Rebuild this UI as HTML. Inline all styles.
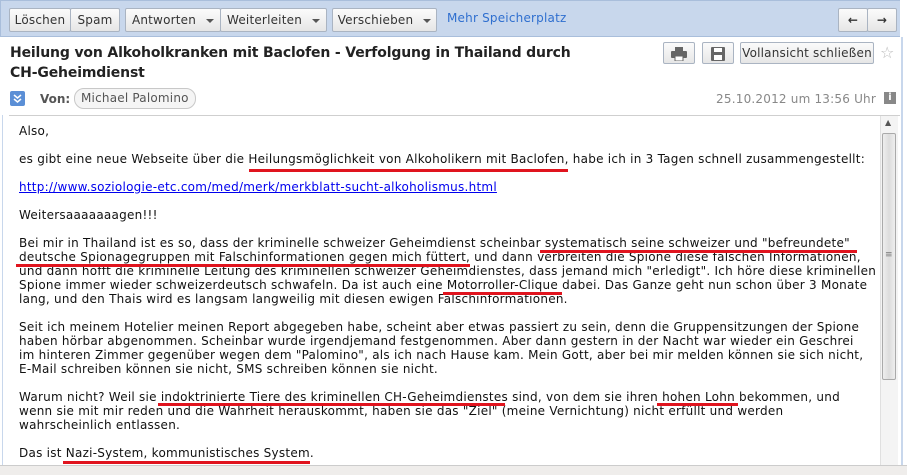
<!DOCTYPE html>
<html><head><meta charset="utf-8"><style>
*{margin:0;padding:0;box-sizing:border-box}
body{width:907px;height:475px;overflow:hidden;background:#fff;font-family:"DejaVu Sans","Liberation Sans",sans-serif;position:relative;color:#222}
.a{position:absolute;white-space:nowrap}
.tb{left:0;top:0;width:903px;height:37px;background:#c8d7ec;border:1px solid #a9bedb}
.btn{position:absolute;top:8px;height:24px;border:1px solid #aab4c2;border-radius:2px;background:linear-gradient(#fbfbfb,#e6e6e6);font-size:12px;color:#333;line-height:22px;text-align:center;letter-spacing:0.2px}
.dd{display:inline-block;width:0;height:0;border-left:4px solid transparent;border-right:4px solid transparent;border-top:4px solid #555;vertical-align:middle;margin-left:10px}
.t{font-size:12px;line-height:14px;color:#111;letter-spacing:0.25px}
.u{position:absolute;height:3px;background:#e0141e}
.title{font-size:14px;font-weight:bold;color:#222;line-height:20px;letter-spacing:-0.15px}
</style></head><body>
<div class="a tb"></div>
<div class="btn" style="left:9px;width:62px">Löschen</div>
<div class="btn" style="left:70px;width:50px">Spam</div>
<div class="btn" style="left:125px;width:96px">Antworten<span class="dd"></span></div>
<div class="btn" style="left:220px;width:107px">Weiterleiten<span class="dd"></span></div>
<div class="btn" style="left:332px;width:105px">Verschieben<span class="dd"></span></div>
<div class="a" style="left:447px;top:11px;font-size:12px;color:#2f6fcf;letter-spacing:0.2px">Mehr Speicherplatz</div>
<div class="btn" style="left:838px;width:30px;font-weight:bold">&#x2190;</div>
<div class="btn" style="left:867px;width:30px;font-weight:bold">&#x2192;</div>

<div class="a title" style="left:10px;top:43px">Heilung von Alkoholkranken mit Baclofen - Verfolgung in Thailand durch<br>CH-Geheimdienst</div>
<div class="btn" style="left:663px;top:42px;width:32px;height:22px"><svg width="16" height="14" viewBox="0 0 16 14" style="margin-top:4px"><rect x="4" y="0" width="8" height="4" fill="#666"/><rect x="0" y="4" width="16" height="7" rx="1" fill="#666"/><rect x="4" y="9" width="8" height="5" fill="#fff" stroke="#666"/></svg></div>
<div class="btn" style="left:702px;top:42px;width:32px;height:22px"><svg width="14" height="14" viewBox="0 0 14 14" style="margin-top:4px"><rect x="0" y="0" width="14" height="14" rx="1" fill="#666"/><rect x="3" y="1" width="8" height="4" fill="#fff"/><rect x="3" y="8" width="8" height="5" fill="#fff"/></svg></div>
<div class="btn" style="left:740px;top:42px;width:134px;height:22px;line-height:20px">Vollansicht schließen</div>
<div class="a" style="left:880px;top:43px;font-size:16px;color:#bbb">☆</div>

<div class="a" style="left:10px;top:91px;width:15px;height:15px;background:#5b8fd6;border-radius:2px"><svg width="15" height="15" viewBox="0 0 15 15"><path d="M4 4l3.5 3 3.5-3M4 8l3.5 3 3.5-3" fill="none" stroke="#fff" stroke-width="1.5"/></svg></div>
<div class="a" style="left:40px;top:92px;font-size:12px;font-weight:bold;color:#555">Von:</div>
<div class="a" style="left:74px;top:88px;height:21px;padding:0 6px;border:1px solid #c8c8c8;border-radius:10px;background:#f5f5f5;font-size:12px;color:#555;line-height:19px;letter-spacing:0.2px">Michael Palomino</div>
<div class="a" style="right:31px;top:92px;font-size:12px;color:#888;letter-spacing:0.2px">25.10.2012 um 13:56 Uhr</div>
<div class="a" style="left:884px;top:92px;width:12px;height:12px;background:#888;color:#fff;font-size:10px;font-weight:bold;line-height:12px;text-align:center">i</div>

<div class="a" style="left:9px;top:115px;width:891px;height:1px;background:#cfcfcf"></div>
<div class="a" style="left:2px;top:115px;width:1px;height:350px;background:#c8d7ec"></div>
<div class="a" style="left:900px;top:0;width:7px;height:475px;background:#fff"></div>
<div class="a" style="left:901px;top:37px;width:2px;height:430px;background:#c8d7ec"></div>
<div class="a" style="left:880px;top:116px;width:18px;height:349px;background:#f4f4f4;border-left:1px solid #e0e0e0"></div>
<div class="a" style="left:882px;top:133px;width:14px;height:247px;background:linear-gradient(90deg,#eee,#ddd,#eee);border:1px solid #aaa;border-radius:2px"></div>
<div class="a" style="left:885px;top:250px;font-size:9px;color:#777">≡</div>
<div class="a" style="left:885px;top:118px;font-size:8px;color:#555">▲</div>
<div class="a" style="left:0;top:465px;width:907px;height:10px;background:#efedeb;border-top:1px solid #ccc"></div>

<div class="a t" style="left:19px;top:124px">Also,</div>
<div class="a t" style="left:19px;top:152px">es gibt eine neue Webseite über die Heilungsmöglichkeit von Alkoholikern mit Baclofen, habe ich in 3 Tagen schnell zusammengestellt:</div>
<div class="a t" style="left:19px;top:180px;color:#00e;text-decoration:underline">http://www.soziologie-etc.com/med/merk/merkblatt-sucht-alkoholismus.html</div>
<div class="a t" style="left:19px;top:208px">Weitersaaaaaaagen!!!</div>
<div class="a t" style="left:19px;top:236px">Bei mir in Thailand ist es so, dass der kriminelle schweizer Geheimdienst scheinbar systematisch seine schweizer und "befreundete"<br>deutsche Spionagegruppen mit Falschinformationen gegen mich füttert, und dann verbreiten die Spione diese falschen Informationen,<br>und dann hofft die kriminelle Leitung des kriminellen schweizer Geheimdienstes, dass jemand mich "erledigt". Ich höre diese kriminellen<br>Spione immer wieder schweizerdeutsch schwafeln. Da ist auch eine Motorroller-Clique dabei. Das Ganze geht nun schon über 3 Monate<br>lang, und den Thais wird es langsam langweilig mit diesen ewigen Falschinformationen.</div>
<div class="a t" style="left:19px;top:320px">Seit ich meinem Hotelier meinen Report abgegeben habe, scheint aber etwas passiert zu sein, denn die Gruppensitzungen der Spione<br>haben hörbar abgenommen. Scheinbar wurde irgendjemand festgenommen. Aber dann gestern in der Nacht war wieder ein Geschrei<br>im hinteren Zimmer gegenüber wegen dem "Palomino", als ich nach Hause kam. Mein Gott, aber bei mir melden können sie sich nicht,<br>E-Mail schreiben können sie nicht, SMS schreiben können sie nicht.</div>
<div class="a t" style="left:19px;top:390px">Warum nicht? Weil sie indoktrinierte Tiere des kriminellen CH-Geheimdienstes sind, von dem sie ihren hohen Lohn bekommen, und<br>wenn sie mit mir reden und die Wahrheit herauskommt, haben sie das "Ziel" (meine Vernichtung) nicht erfüllt und werden<br>wahrscheinlich entlassen.</div>
<div class="a t" style="left:19px;top:446px">Das ist Nazi-System, kommunistisches System.</div>

<div class="u" style="left:249px;top:169px;width:319px"></div>
<div class="u" style="left:540px;top:250px;width:317px"></div>
<div class="u" style="left:16px;top:264px;width:454px"></div>
<div class="u" style="left:443px;top:292px;width:119px"></div>
<div class="u" style="left:158px;top:403px;width:347px"></div>
<div class="u" style="left:657px;top:403px;width:81px"></div>
<div class="u" style="left:63px;top:461px;width:247px"></div>
</body></html>
